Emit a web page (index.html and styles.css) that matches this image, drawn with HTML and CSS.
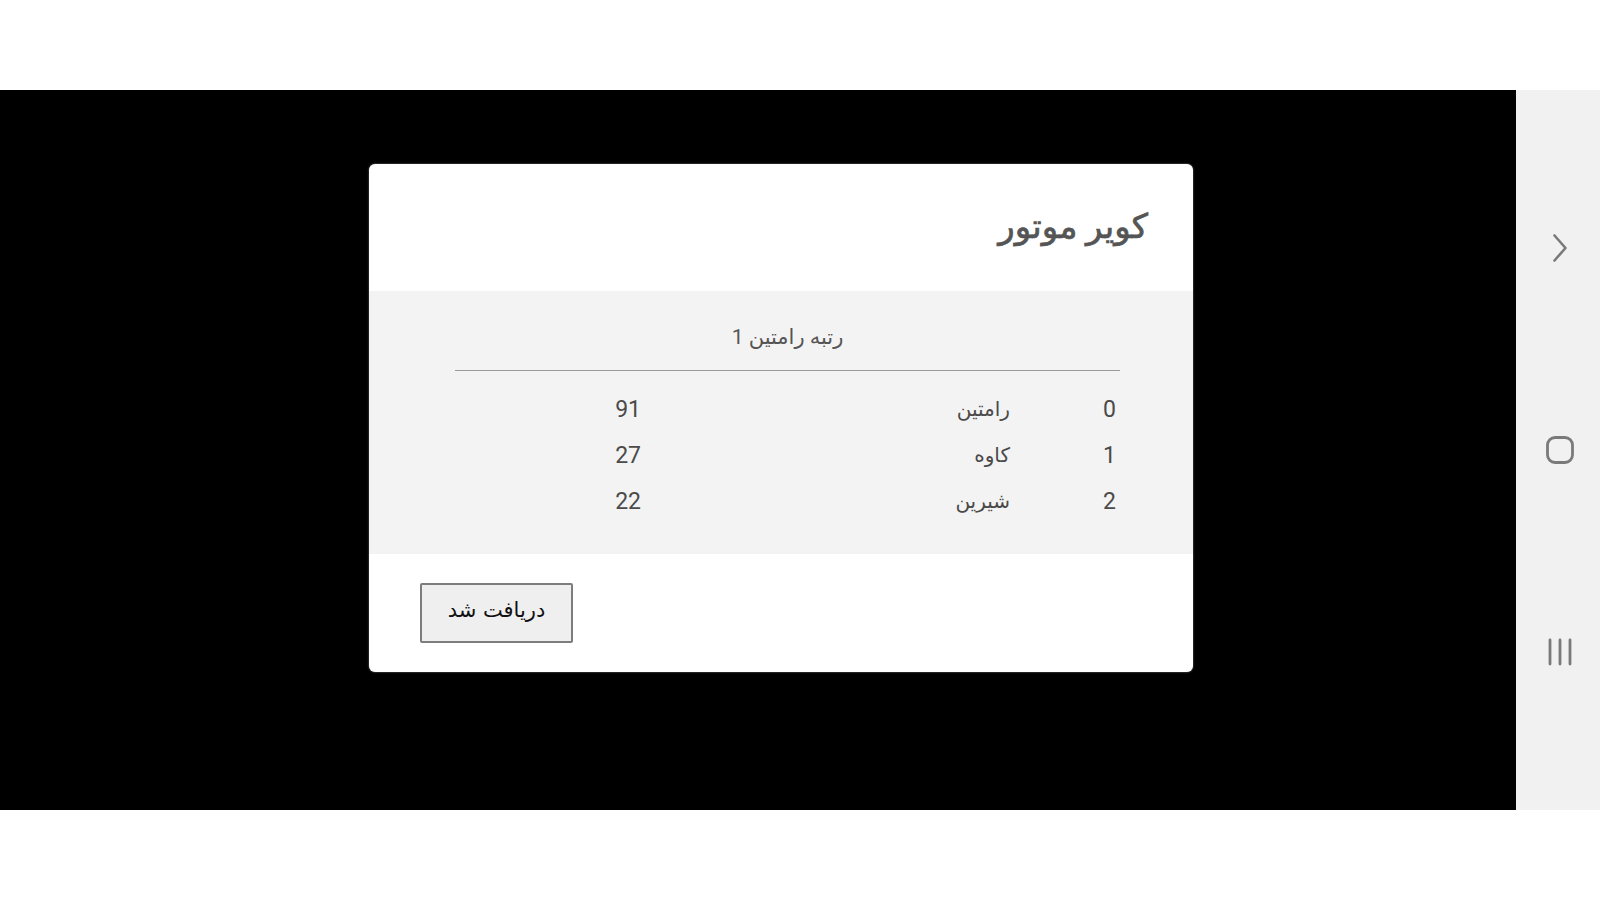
FILE: index.html
```html
<!DOCTYPE html>
<html lang="fa">
<head>
<meta charset="utf-8">
<title>کویر موتور</title>
<link rel="stylesheet" href="styles.css">
</head>
<body>
<div class="stage">
  <div class="screen">
    <div class="dialog" dir="rtl">
      <div class="dialog-header">
        <h1 class="title">کویر موتور</h1>
      </div>
      <div class="dialog-body">
        <div class="subtitle">رتبه رامتین 1</div>
        <div class="divider"></div>
        <div class="rows">
          <div class="row"><span class="rank">0</span><span class="name">رامتین</span><span class="score">91</span></div>
          <div class="row"><span class="rank">1</span><span class="name">کاوه</span><span class="score">27</span></div>
          <div class="row"><span class="rank">2</span><span class="name">شیرین</span><span class="score">22</span></div>
        </div>
      </div>
      <div class="dialog-footer">
        <button class="btn">دریافت شد</button>
      </div>
    </div>
  </div>
  <div class="nav">
    <div class="nav-icon">
      <svg width="30" height="30" viewBox="0 0 30 30"><path d="M9.5 2.5 L20.5 15 L9.5 27.5" fill="none" stroke="#7a7a7a" stroke-width="2.6" stroke-linecap="round" stroke-linejoin="round"/></svg>
    </div>
    <div class="nav-icon">
      <svg width="30" height="30" viewBox="0 0 30 30"><rect x="2.5" y="2.5" width="25" height="25" rx="7.5" fill="none" stroke="#7a7a7a" stroke-width="2.8"/></svg>
    </div>
    <div class="nav-icon">
      <svg width="30" height="30" viewBox="0 0 30 30"><path d="M5 3 V27 M15 3 V27 M25 3 V27" fill="none" stroke="#7a7a7a" stroke-width="2.8" stroke-linecap="round"/></svg>
    </div>
  </div>
</div>
</body>
</html>
```
FILE: styles.css
```css
html, body {
  margin: 0;
  padding: 0;
  background: #ffffff;
}
body {
  font-family: Roboto, "DejaVu Sans", sans-serif;
}
.stage {
  display: flex;
  height: 720px;
  margin-top: 90px;
}
.screen {
  flex: 1;
  background: #000000;
  padding: 74px 0 0 369px;
  box-sizing: border-box;
}
.nav {
  width: 84px;
  background: #f1f1f1;
  display: flex;
  flex-direction: column;
  align-items: center;
  padding-top: 143px;
  padding-left: 4px;
  gap: 172px;
  box-sizing: border-box;
}
.nav-icon {
  width: 30px;
  height: 30px;
}
.nav-icon svg {
  display: block;
}
.dialog {
  width: 824px;
  background: #ffffff;
  border-radius: 6px;
  overflow: hidden;
  box-shadow: 0 0 2px rgba(255, 255, 255, 0.5);
}
.dialog-header {
  height: 127px;
  display: flex;
  align-items: center;
  padding-right: 45px;
  box-sizing: border-box;
}
.title {
  margin: 0;
  font-size: 34px;
  font-weight: normal;
  -webkit-text-stroke: 0.7px #555555;
  color: #555555;
  line-height: 40px;
  padding-bottom: 4px;
}
.dialog-body {
  height: 263px;
  background: #f3f3f3;
  padding: 0 73px 0 86px;
  box-sizing: border-box;
}
.subtitle {
  text-align: center;
  font-size: 21px;
  color: #555555;
  line-height: 32px;
  padding-top: 30px;
  height: 79px;
  box-sizing: border-box;
}
.divider {
  height: 1px;
  background: #9a9a9a;
}
.rows {
  padding-top: 15px;
}
.row {
  display: grid;
  grid-template-columns: 106px 369px 1fr;
  height: 46px;
  align-items: center;
  padding-right: 4px;
  font-size: 23px;
  color: #4a4a4a;
}
.name {
  font-size: 20px;
}
.dialog-footer {
  height: 118px;
  display: flex;
  justify-content: flex-end;
  align-items: flex-start;
  padding: 29px 0 0 51px;
  box-sizing: border-box;
}
.btn {
  width: 153px;
  height: 60px;
  background: #efefef;
  border: 2px solid #7d7d7d;
  border-radius: 2px;
  font-family: "DejaVu Sans", sans-serif;
  font-size: 21px;
  color: #111111;
  padding: 0 0 6px 0;
}
```
